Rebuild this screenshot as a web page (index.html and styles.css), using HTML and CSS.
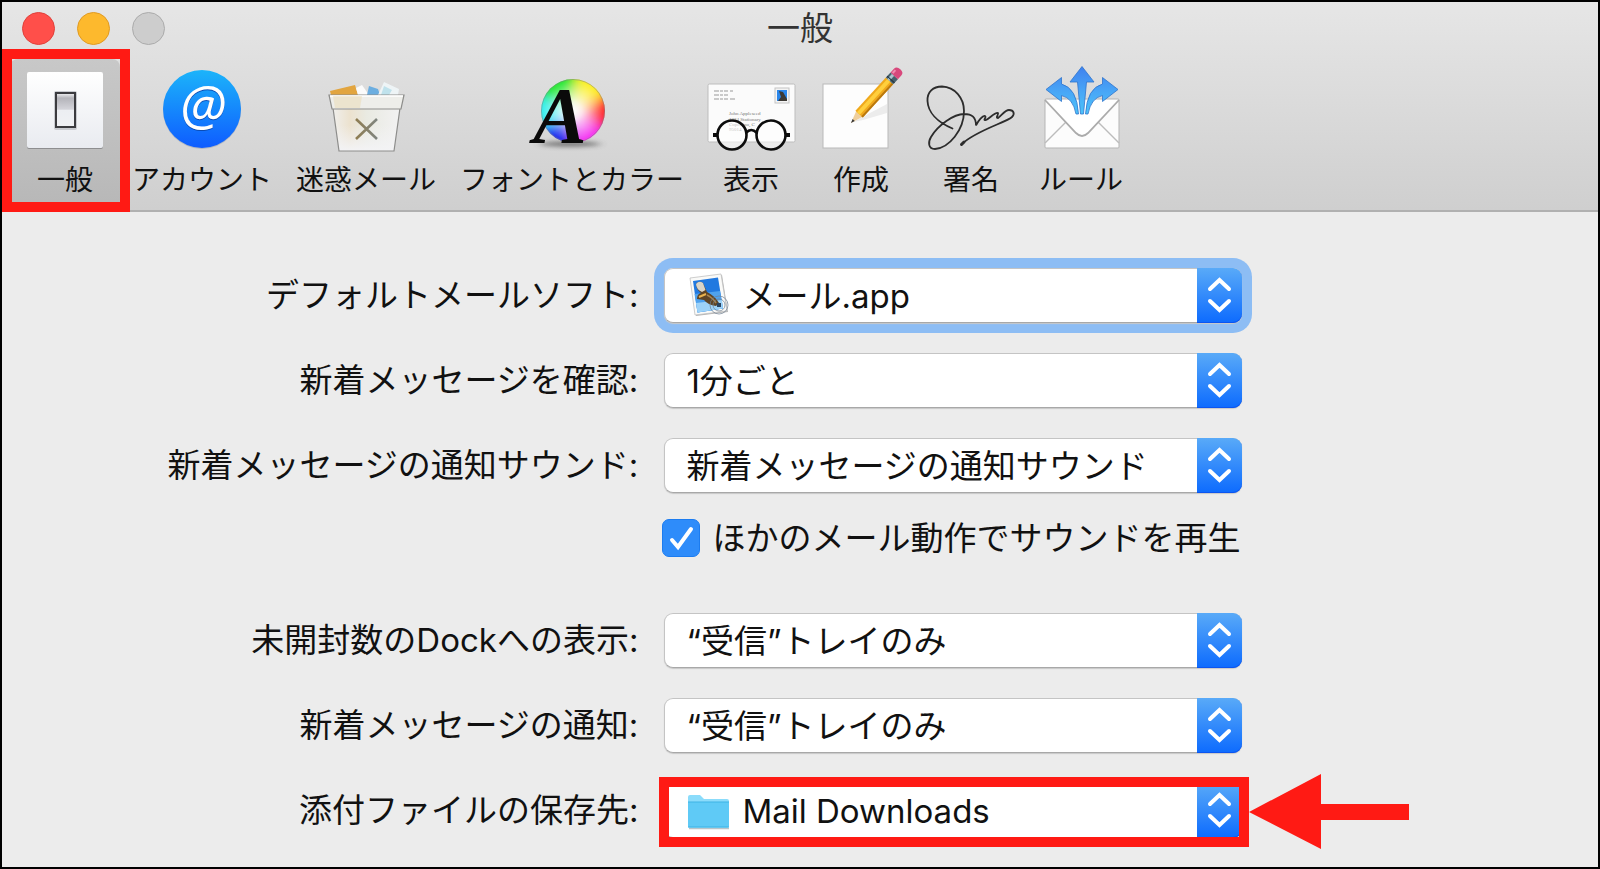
FILE: index.html
```html
<!DOCTYPE html>
<html lang="ja">
<head>
  <title>一般</title>
  <meta charset="UTF-8">
  <meta name="viewport" content="width=device-width, initial-scale=1.0">
  <link rel="stylesheet" href="styles.css">
</head>
<body>
  <div class="window">
    <header class="header">
      <div class="titlebar">
        <div class="lights">
          <button class="light close" aria-label="閉じる"></button>
          <button class="light minimize" aria-label="しまう"></button>
          <button class="light zoom" aria-label="拡大" disabled></button>
        </div>
        <h1>一般</h1>
      </div>
      <nav class="toolbar">
        <button class="tab active">
          <svg class="icon" viewBox="0 0 96 96">
            <defs>
              <linearGradient id="plate" x1="0" y1="0" x2="0" y2="1">
                <stop offset="0" stop-color="#fff"/>
                <stop offset="1" stop-color="#e9ebf0"/>
              </linearGradient>
              <linearGradient id="switch" x1="0" y1="0" x2="0" y2="1">
                <stop offset="0" stop-color="#f4f4f6"/>
                <stop offset="0.15" stop-color="#b4b4ba"/>
                <stop offset="0.48" stop-color="#d4d4da"/>
                <stop offset="0.5" stop-color="#eceef2"/>
                <stop offset="1" stop-color="#f0f1f4"/>
              </linearGradient>
            </defs>
            <rect x="10" y="9" width="76" height="76" rx="2" fill="#8e8e90"/>
            <rect x="10" y="8" width="76" height="76" rx="2" fill="url(#plate)"/>
            <rect x="37" y="27" width="23" height="39" rx="2" fill="#c9cbd0"/>
            <rect x="39" y="29" width="19" height="34" fill="url(#switch)" stroke="#3b3b3f" stroke-width="2"/>
          </svg>
          <span>一般</span>
        </button>
        <button class="tab">
          <svg class="icon" viewBox="0 0 96 96">
            <defs>
              <linearGradient id="account" x1="0" y1="0" x2="0" y2="1">
                <stop offset="0" stop-color="#1cb4fa"/>
                <stop offset="1" stop-color="#0e5cff"/>
              </linearGradient>
            </defs>
            <circle cx="48" cy="46" r="39" fill="#9aa3b4" opacity="0.6"/>
            <circle cx="48" cy="45" r="39" fill="url(#account)"/>
            <text class="at at-shadow" x="49" y="62">@</text>
            <text class="at" x="49" y="61">@</text>
          </svg>
          <span>アカウント</span>
        </button>
        <button class="tab">
          <svg class="icon" viewBox="0 0 96 96">
            <defs>
              <linearGradient id="bin" x1="0" y1="0" x2="1" y2="0">
                <stop offset="0" stop-color="#f0efec"/>
                <stop offset="0.25" stop-color="#ece2cf"/>
                <stop offset="0.5" stop-color="#e9eae2"/>
                <stop offset="1" stop-color="#f2f2f2"/>
              </linearGradient>
              <linearGradient id="binFade" x1="0" y1="0" x2="0" y2="1">
                <stop offset="0.4" stop-color="#f3f3f5" stop-opacity="0"/>
                <stop offset="1" stop-color="#f3f3f5"/>
              </linearGradient>
              <linearGradient id="cross" x1="0" y1="0" x2="1" y2="0">
                <stop offset="0" stop-color="#8f7d52"/>
                <stop offset="1" stop-color="#7f8580"/>
              </linearGradient>
            </defs>
            <path d="M12 27 37 21 40 31H13z" fill="#e2a53f"/>
            <path d="M38 24 44 21 51 31H40z" fill="#fbfbfb"/>
            <path d="M51 22 60 25 62 31H49z" fill="#6caee0"/>
            <path d="M66 18 81 25 80 31H60z" fill="#eef4f6"/>
            <path d="M66 22 74 26 71 31H63z" fill="#bfe2ec"/>
            <path d="M15 44H82L76 87H21z" fill="url(#bin)"/>
            <path d="M15 44H82L76 87H21z" fill="url(#binFade)" stroke="#8d8d8b" stroke-width="1.2"/>
            <path d="M11 31H86L83 45H14z" fill="#eeeeea" stroke="#8d8d8b" stroke-width="1.2"/>
            <path d="M12 32H85" stroke="#fff" stroke-width="1.6"/>
            <path d="M15 32H44L42 44H17z" fill="#e9d6ae" opacity="0.45"/>
            <path d="M38 55 59 75M59 55 38 75" fill="none" stroke="url(#cross)" stroke-width="2.6"/>
          </svg>
          <span>迷惑メール</span>
        </button>
        <button class="tab">
          <svg class="icon" viewBox="0 0 96 96">
            <defs>
              <clipPath id="wheelClip"><circle cx="49" cy="47" r="32"/></clipPath>
              <filter id="soften" x="-30%" y="-30%" width="160%" height="160%"><feGaussianBlur stdDeviation="6"/></filter>
              <filter id="ground" x="-30%" y="-100%" width="160%" height="300%"><feGaussianBlur stdDeviation="4 2"/></filter>
              <radialGradient id="wheelCenter">
                <stop offset="0" stop-color="#fff"/>
                <stop offset="0.3" stop-color="#fff" stop-opacity="0.8"/>
                <stop offset="1" stop-color="#fff" stop-opacity="0"/>
              </radialGradient>
            </defs>
            <ellipse cx="46" cy="80" rx="30" ry="3" fill="#444" opacity="0.6" filter="url(#ground)"/>
            <g clip-path="url(#wheelClip)">
              <g transform="translate(49 47)" filter="url(#soften)">
                <path d="M0 0 5-60 54-25z" fill="#fdf032"/>
                <path d="M0 0 54-25 52 30z" fill="#ff3438"/>
                <path d="M0 0 52 30 0 60z" fill="#f53cf2"/>
                <path d="M0 0 0 60-52 30z" fill="#2c36f0"/>
                <path d="M0 0-52 30-54-25z" fill="#3cf0f0"/>
                <path d="M0 0-54-25 5-60z" fill="#30e83c"/>
              </g>
              <circle cx="49" cy="47" r="30" fill="url(#wheelCenter)"/>
            </g>
            <circle cx="49" cy="47" r="31.5" fill="none" stroke="#777" stroke-opacity="0.45"/>
            <text class="font-letter" x="36" y="79">A</text>
          </svg>
          <span>フォントとカラー</span>
        </button>
        <button class="tab">
          <svg class="icon" viewBox="0 0 96 96">
            <rect x="5" y="20" width="87" height="58" rx="1.5" fill="#fbfbfb" stroke="#bdbdbd"/>
            <g stroke="#999" stroke-width="1.2" stroke-dasharray="5 1 3 1 4 2">
              <path d="M11 27H30"/>
              <path d="M11 31H25"/>
              <path d="M11 35H32"/>
            </g>
            <rect x="72" y="24" width="14" height="15" fill="#f4f4f4" stroke="#c4c4c4"/>
            <rect x="74" y="26" width="10" height="11" fill="#2a86ea"/>
            <path d="M76 27 80 28 84 35V37H75L78 33z" fill="#3d3a35"/>
            <g class="address">
              <text x="26" y="51">John Appleseed</text>
              <text x="26" y="57">1234 Stationary</text>
              <text x="26" y="62">Cupertino, C</text>
              <text x="26" y="67">95014</text>
            </g>
            <g stroke="#0c0c0c" stroke-width="2.6" fill="#fff" fill-opacity="0.55">
              <circle cx="29" cy="71" r="14.5"/>
              <circle cx="68" cy="71" r="14.5"/>
              <path d="M43 69Q48 63 54 69" fill="none"/>
              <path d="M10 71H15M82 71H87" stroke-width="4"/>
            </g>
          </svg>
          <span>表示</span>
        </button>
        <button class="tab">
          <svg class="icon" viewBox="0 0 96 96">
            <rect x="10" y="20" width="65" height="64" fill="#fdfdfd" stroke="#b9b9b9"/>
            <path d="M40 58 74 40V49L50 56z" fill="#ececec"/>
            <g transform="translate(38 59) rotate(-47.5)">
              <path d="M0 0 13-4.5V4.5z" fill="#efcf9c"/>
              <path d="M0 0 4-1.5V1.5z" fill="#3a3a3a"/>
              <rect x="12" y="-5" width="45" height="10" fill="#f0a91c"/>
              <rect x="12" y="-3" width="45" height="4" fill="#ffcf3d"/>
              <rect x="12" y="3" width="45" height="2" fill="#b9780f"/>
              <rect x="57" y="-5" width="7" height="10" fill="#46606c"/>
              <rect x="57" y="-3" width="7" height="3" fill="#a9c3cc"/>
              <path d="M59-5V5" stroke="#22303a"/>
              <path d="M64-5H69Q73-5 73 0T69 5H64z" fill="#d8487c"/>
              <path d="M65-3H69" stroke="#f08cb0" stroke-width="2"/>
            </g>
          </svg>
          <span>作成</span>
        </button>
        <button class="tab">
          <svg class="icon" viewBox="0 0 96 96" fill="none" stroke="#2c2c2c" stroke-width="1.8" stroke-linecap="round">
            <path d="M29.500 64.500C14 58 5 48 4.500 37 4 28 10 22.500 19 22.500 32 23 41 34 41 47 41 66 26 84 12 85 5 85 5 78 8 73 15 61 31 50 41 50 49 50 53 53 53 61.500 55 57 60 51 62 52 64 53 59 57 63 56 67 54 72 48 75 49 76 50 72 54 75 54 79 51 82 46 86 46 91 46 92 50 89 53 84 58 52 67 39 80"/>
            <path d="M38.500 80.500 41 78" stroke-width="3"/>
          </svg>
          <span>署名</span>
        </button>
        <button class="tab">
          <svg class="icon" viewBox="0 0 96 96">
            <defs>
              <linearGradient id="arrows" gradientUnits="userSpaceOnUse" x1="0" y1="2" x2="0" y2="50">
                <stop offset="0" stop-color="#3f80ee"/>
                <stop offset="0.5" stop-color="#48a4f6"/>
                <stop offset="1" stop-color="#4cc4fa"/>
              </linearGradient>
            </defs>
            <rect x="12" y="35" width="74" height="49" rx="1" fill="#fcfcfc" stroke="#b5b5b5"/>
            <path d="M12 79 33 58M86 79 65 58" stroke="#bcbcbc" stroke-width="1.4"/>
            <path d="M12 36 43 69Q49 75 55 69L86 36" fill="#fff" stroke="#ababab" stroke-width="1.8"/>
            <g fill="url(#arrows)" stroke="#2f74cc" stroke-width="0.8">
              <path d="M49 2.500 61 18H53.500Q52 34 50.500 50H47.500Q46 34 44.500 18H37z"/>
              <path d="M13 25.500 28.500 13.500V20Q44 24 45.500 50H43Q40 34 28.500 31.500V37.500z"/>
              <path d="M85 25.500 69.500 13.500V20Q54 24 52.500 50H55Q58 34 69.500 31.500V37.500z"/>
            </g>
          </svg>
          <span>ルール</span>
        </button>
      </nav>
    </header>

    <form class="settings">
      <div class="row">
        <label for="client">デフォルトメールソフト:</label>
        <div class="popup with-icon focused">
          <select id="client"><option>メール.app</option></select>
          <svg class="popup-icon" viewBox="0 0 44 44">
            <path d="M3 7 34 3 40 40 8 44z" fill="#b5b5b5"/>
            <path d="M2 6 33 2 39 39 7 43z" fill="#fafaf8" stroke="#c2c2c2" stroke-width="0.8"/>
            <path d="M5 9 30 5.500 35 36.500 9.500 40.500z" fill="#2179e0"/>
            <path d="M6.500 22 32 19 35 36.500 9.500 40.500z" fill="#4fa2ee"/>
            <path d="M8 31 34 28 35 36.500 9.500 40.500z" fill="#9dd2f8"/>
            <path d="M8 12Q11 8 15 11L19 20Q27 24 31 31L28 34Q20 33 16 28L9 27Q9 22 13 21 8 17 8 12z" fill="#5e4426"/>
            <path d="M8 12Q11 8 15 11L17.500 18 14 20Q8 17 8 12z" fill="#d9d4c8"/>
            <path d="M19 23Q25 26 28 31" fill="none" stroke="#a58454" stroke-width="1.6"/>
            <path d="M11 25 18 22" stroke="#e9b24e" stroke-width="2"/>
            <g fill="none" stroke="#6f7f92" stroke-opacity="0.7">
              <circle cx="31" cy="33" r="9"/>
              <circle cx="31" cy="33" r="6"/>
            </g>
            <rect x="29" y="31" width="4" height="4" fill="#2b4460"/>
          </svg>
          <svg class="stepper" viewBox="0 0 45 55"><path d="M13 21 22.500 12 32 21M13 33 22.500 42 32 33"/></svg>
        </div>
      </div>
      <div class="row">
        <label for="check">新着メッセージを確認:</label>
        <div class="popup">
          <select id="check"><option>1分ごと</option></select>
          <svg class="stepper" viewBox="0 0 45 55"><path d="M13 21 22.500 12 32 21M13 33 22.500 42 32 33"/></svg>
        </div>
      </div>
      <div class="row">
        <label for="sound">新着メッセージの通知サウンド:</label>
        <div class="popup">
          <select id="sound"><option>新着メッセージの通知サウンド</option></select>
          <svg class="stepper" viewBox="0 0 45 55"><path d="M13 21 22.500 12 32 21M13 33 22.500 42 32 33"/></svg>
        </div>
      </div>
      <div class="row check-row">
        <label class="check">
          <span class="box">
            <input type="checkbox" checked>
            <svg class="tick" viewBox="0 0 38 38"><path d="M10 21 16 28 29 10"/></svg>
          </span>
          ほかのメール動作でサウンドを再生
        </label>
      </div>
      <div class="row">
        <label for="dock">未開封数のDockへの表示:</label>
        <div class="popup">
          <select id="dock"><option>“受信”トレイのみ</option></select>
          <svg class="stepper" viewBox="0 0 45 55"><path d="M13 21 22.500 12 32 21M13 33 22.500 42 32 33"/></svg>
        </div>
      </div>
      <div class="row">
        <label for="notify">新着メッセージの通知:</label>
        <div class="popup">
          <select id="notify"><option>“受信”トレイのみ</option></select>
          <svg class="stepper" viewBox="0 0 45 55"><path d="M13 21 22.500 12 32 21M13 33 22.500 42 32 33"/></svg>
        </div>
      </div>
      <div class="row">
        <label for="downloads">添付ファイルの保存先:</label>
        <div class="popup with-icon marked">
          <select id="downloads"><option>Mail Downloads</option></select>
          <svg class="popup-icon" viewBox="0 0 44 44">
            <path d="M1 41.500H41" stroke="#b9c4ca" stroke-width="1.5"/>
            <path d="M0 10Q0 8 2 8H12L16 12H39Q41 12 41 14V39Q41 40.500 39 40.500H2Q0 40.500 0 39z" fill="#8bdcfb"/>
            <path d="M0 15H41V39Q41 40.500 39 40.500H2Q0 40.500 0 39z" fill="#5fcaf6"/>
            <path d="M0 15H41M0 40H41" stroke="#3fb3e4"/>
          </svg>
          <svg class="stepper" viewBox="0 0 45 55"><path d="M13 21 22.500 12 32 21M13 33 22.500 42 32 33"/></svg>
          <svg class="arrow" viewBox="0 0 160 75"><path d="M0 38 72 0V30H160V46H72V75z"/></svg>
        </div>
      </div>
    </form>
  </div>
</body>
</html>
```

FILE: styles.css
```css
* {
  box-sizing: border-box;
}
body {
  margin: 0;
  font-family: Inter, "Noto Sans CJK JP", sans-serif;
  font-size: 33px;
  color: #111;
}
button, select, input {
  font: inherit;
  color: inherit;
  margin: 0;
}
.window {
  min-height: 100vh;
  border: 2px solid #000;
  background-color: #ececec;
}

/* Title bar and toolbar */
.header {
  padding-bottom: 8px;
  border-bottom: 2px solid #b0b0b0;
  background: linear-gradient(#e6e6e6, #cfcfcf);
}
.titlebar {
  display: grid;
  grid-template-columns: 1fr auto 1fr;
  align-items: center;
  height: 52px;
  padding: 0 20px;
}
.titlebar h1 {
  margin: 0;
  font-size: 33px;
  font-weight: 400;
  line-height: 48px;
  color: #333;
}
.lights {
  display: flex;
  gap: 22px;
}
.light {
  width: 33px;
  height: 33px;
  padding: 0;
  border: 1px solid #e0403a;
  border-radius: 50%;
  background-color: #ff4f4a;
}
.light.minimize {
  border-color: #e09a22;
  background-color: #fdb92d;
}
.light.zoom {
  border-color: #ababab;
  background-color: #cdcdcd;
}
.toolbar {
  display: flex;
  padding: 5px 8px 0;
}
.tab {
  position: relative;
  display: flex;
  flex-direction: column;
  align-items: center;
  min-width: 110px;
  padding: 5px 12px 2px;
  border: none;
  background: none;
  font-size: 28px;
  line-height: 40px;
  white-space: nowrap;
}
.tab.active {
  border-radius: 8px 8px 0 0;
  background: linear-gradient(#c8c8c8, #b8b8b8);
}
.tab.active::after {
  content: "";
  position: absolute;
  inset: -10px -10px -10px -8px;
  border: 10px solid #ff1a14;
}
.icon {
  display: block;
  width: 96px;
  height: 96px;
  margin: 0 -5px;
}
.at {
  font-family: "Open Sans", sans-serif;
  font-style: italic;
  font-size: 54px;
  text-anchor: middle;
  fill: #fff;
}
.at-shadow {
  fill: #0b4cb4;
}
.font-letter {
  font-family: "Liberation Serif", serif;
  font-size: 80px;
  font-style: italic;
  font-weight: bold;
  text-anchor: middle;
  fill: #0a0a0a;
}
.address {
  font-family: "Liberation Serif", serif;
  font-size: 5px;
  fill: #777;
}

/* Settings */
.settings {
  display: flex;
  flex-direction: column;
  gap: 30px;
  padding: 56px 0 20px;
}
.row {
  display: grid;
  grid-template-columns: 40% minmax(0, 578px);
  column-gap: 24px;
  align-items: center;
  line-height: 55px;
}
.row > label {
  padding-right: 2px;
  text-align: right;
}
.popup {
  position: relative;
  border-radius: 9px;
}
.popup select {
  display: block;
  width: 100%;
  height: 55px;
  padding: 0 50px 0 21px;
  border: 1px solid #c4c4c4;
  border-bottom-color: #a8a8a8;
  border-radius: 9px;
  background-color: #fff;
  box-shadow: 0 1px 1px #c8c8c8;
  appearance: none;
  outline: none;
}
.popup.with-icon select {
  padding-left: 77px;
}
.popup.focused {
  box-shadow: 0 0 0 10px #8dbdf4;
}
.popup-icon {
  position: absolute;
  top: 4px;
  left: 24px;
  width: 44px;
  height: 44px;
  pointer-events: none;
}
.stepper {
  position: absolute;
  top: 0;
  right: 0;
  width: 45px;
  height: 55px;
  border-radius: 0 9px 9px 0;
  background: linear-gradient(#59aaf8, #0d6bfe);
  box-shadow: inset 0 -1px #0c55f0;
  fill: none;
  stroke: #fff;
  stroke-width: 4;
  stroke-linecap: round;
  pointer-events: none;
}
.popup.marked::after {
  content: "";
  position: absolute;
  inset: -6px -7px -9px -5px;
  border: 10px solid #ff1a14;
  pointer-events: none;
}
.arrow {
  position: absolute;
  top: -9px;
  left: calc(100% + 7px);
  width: 160px;
  height: 75px;
  fill: #ff1a14;
}
.check-row {
  margin: -4px 0 26px;
  line-height: 38px;
}
.row > .check {
  grid-column: 2;
  display: flex;
  align-items: center;
  gap: 12px;
  margin-left: -2px;
  text-align: left;
  white-space: nowrap;
}
.box {
  display: grid;
  width: 38px;
  height: 38px;
}
.box input, .tick {
  grid-area: 1 / 1;
  width: 38px;
  height: 38px;
}
.box input {
  appearance: none;
  border: 1px solid #1c7cf0;
  border-radius: 7px;
  background-color: #2e8cfa;
}
.tick {
  z-index: 1;
  fill: none;
  stroke: #fff;
  stroke-width: 4;
  stroke-linecap: round;
  pointer-events: none;
}
```
